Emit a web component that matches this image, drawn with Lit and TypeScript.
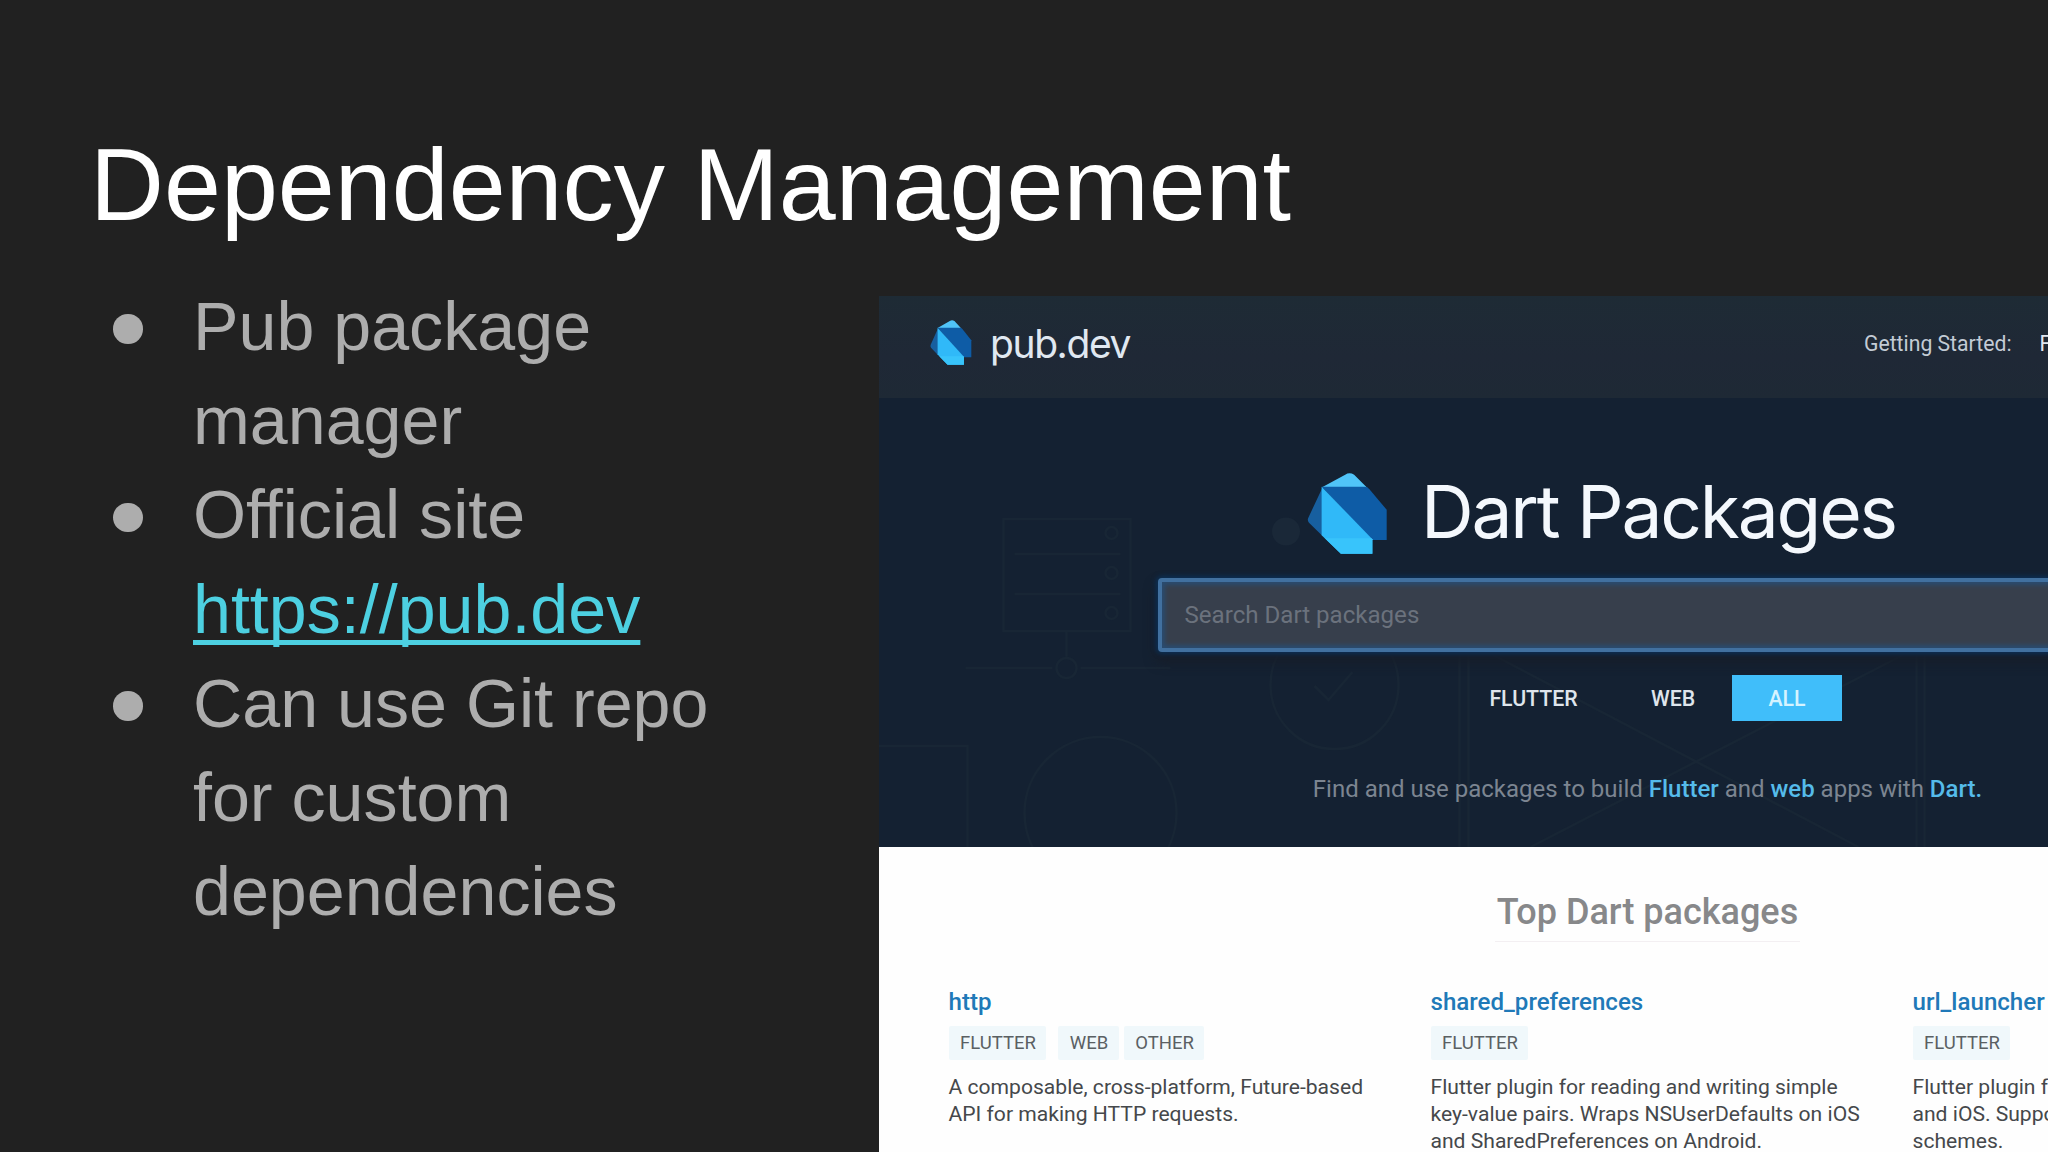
import { LitElement, html, css, svg } from "lit";

interface Pkg {
  name: string;
  tags: string[];
  lines: string[];
}

const PACKAGES: Pkg[] = [
  {
    name: "http",
    tags: ["FLUTTER", "WEB", "OTHER"],
    lines: ["A composable, cross-platform, Future-based", "API for making HTTP requests."],
  },
  {
    name: "shared_preferences",
    tags: ["FLUTTER"],
    lines: [
      "Flutter plugin for reading and writing simple",
      "key-value pairs. Wraps NSUserDefaults on iOS",
      "and SharedPreferences on Android.",
    ],
  },
  {
    name: "url_launcher",
    tags: ["FLUTTER"],
    lines: ["Flutter plugin for launching a URL on Android", "and iOS. Supports web, phone, SMS, and email", "schemes."],
  },
];

class DartLogo extends LitElement {
  static styles = css`
    :host { display: block; flex: none; }
    .mark { display: block; width: 100%; height: 100%; }
  `;
  render() {
    return html`<svg class="mark" viewBox="48 39 244 241" preserveAspectRatio="none">
      ${svg`
        <path d="M94 84 L52 172 Q48 180 54 187 L94 226 Z" fill="#175f9f" />
        <path d="M92 82 L163 44 Q176 36 190 44 L230 84 Z" fill="#50c4f8" />
        <path d="M92 80 H222 Q230 80 236 87 L288 148 V238 H243 Z" fill="#0e5ca6" />
        <path d="M92 80 L245 236 V279 H150 L92 224 Z" fill="#30b9f8" />
        <path d="M102 233 H242 L245 236 V279 H150 Z" fill="#38c4fb" />
      `}
    </svg>`;
  }
}
customElements.define("dart-logo", DartLogo);

class PackageCard extends LitElement {
  static properties = { pkg: { attribute: false } };
  declare pkg: Pkg;
  static styles = css`
    :host { display: block; font-family: Roboto, "Liberation Sans", sans-serif; white-space: nowrap; }
    .name { font-size: 24.1px; font-weight: 500; line-height: 30px; color: #2079b8; }
    .tags { display: flex; gap: 5px; margin-top: 9.3px; }
    .tag { padding: 0 10.5px 0 11.5px; font-size: 18.5px; line-height: 34px; height: 34px; color: #5a6063; background: #f0f8fb; border-radius: 2px; }
    .first { margin-right: 7px; }
    .desc { margin-top: 12.6px; font-size: 21.1px; line-height: 27px; color: #45484b; }
  `;
  render() {
    return html`
      <div class="name">${this.pkg.name}</div>
      <div class="tags">
        ${this.pkg.tags.map((t, i) => html`<span class="tag ${i === 0 ? "first" : ""}">${t}</span>`)}
      </div>
      <div class="desc">${this.pkg.lines.map((l) => html`<div>${l}</div>`)}</div>
    `;
  }
}
customElements.define("package-card", PackageCard);

class PubSite extends LitElement {
  static styles = css`
    :host { display: block; width: 1538px; background: #fefefe; font-family: Roboto, "Liberation Sans", sans-serif; white-space: nowrap; }
    .top {
      display: grid; grid-template-columns: 934px auto; align-items: start; justify-content: start;
      height: 102px; padding: 23px 0 0 51.5px; box-sizing: border-box;
      background: linear-gradient(#1e2b35, #1f2836 60%, #1e2935);
    }
    .brand { display: flex; gap: 18px; }
    .brand-logo { width: 42px; height: 45px; margin-top: 0.8px; }
    .brand-name { font: 400 39px/49px Inter, sans-serif; letter-spacing: -1.4px; color: #e0e8f1; }
    .nav { display: flex; gap: 28px; margin-top: 7px; font-size: 21.2px; line-height: 36px; color: #c3cbd5; }
    .nav-item { color: #e0e6ee; }
    .hero { position: relative; height: 448.7px; padding-top: 75px; box-sizing: border-box; background: #142132; }
    .deco { position: absolute; left: 0; top: 0; width: 1538px; height: 448.7px; }
    .content { position: relative; display: flex; flex-direction: column; align-items: center; }
    .heading { display: flex; gap: 33.5px; align-self: flex-start; margin-left: 428px; }
    .heading-logo { width: 81px; height: 81px; }
    .heading-text { font: 400 73px/78px Inter, sans-serif; letter-spacing: -2.15px; color: #f4f8fd; height: 81px; }
    .search {
      width: 980px; height: 74px; margin-top: 23.7px; padding-left: 23px; box-sizing: border-box;
      border: 4px solid #41709f; border-radius: 4px; background: #373f4c;
      box-shadow: 0 0 5px 2px #0a3058, 0 8px 12px 2px #171d28, inset 0 0 4px 3px #2a4c70;
      font-size: 24.1px; line-height: 67px; color: #6b727d;
    }
    .tabs { display: flex; gap: 1.3px; margin-top: 23.3px; }
    .tab { padding: 0 36px; height: 46.5px; font-size: 21.3px; font-weight: 500; line-height: 48px; color: #dfe5ec; }
    .selected { background: #40befa; color: #d5f3ff; }
    .tagline { margin-top: 50px; font-size: 24px; line-height: 36px; color: #7c8591; }
    .hl { font-weight: 500; color: #55bbea; }
    .list { display: flex; flex-direction: column; align-items: center; padding-top: 43.3px; }
    .list-title { padding: 0 2px 7px; border-bottom: 1.5px solid #f3eff2; font-size: 36px; font-weight: 500; line-height: 44px; color: #87888a; }
    .cards { display: grid; grid-template-columns: repeat(3, 432px); gap: 50px; align-self: stretch; padding-left: 70px; margin-top: 44.7px; }
  `;
  render() {
    return html`
      <header class="top">
        <div class="brand">
          <dart-logo class="brand-logo"></dart-logo>
          <span class="brand-name">pub.dev</span>
        </div>
        <nav class="nav"><span>Getting Started:</span><span class="nav-item">Flutter</span></nav>
      </header>
      <section class="hero">
        <svg class="deco" viewBox="878.5 398 1538 448.7" fill="none" stroke="#182635" stroke-width="2.5">
          ${svg`
            <rect x="1003" y="519" width="127" height="112" />
            <path d="M1014 554H1120M1014 594H1120M1066 632V658M965 668H1052M1080 668H1170" />
            <circle cx="1111" cy="533" r="6" /><circle cx="1111" cy="573" r="6" /><circle cx="1111" cy="613" r="6" />
            <circle cx="1066" cy="668" r="10" />
            <path d="M878 746H967V847" />
            <circle cx="1100" cy="813" r="76" />
            <circle cx="1334" cy="685" r="64" />
            <path d="M1314 686L1328 700L1352 672" />
            <circle cx="1285.500" cy="531.500" r="14" fill="#1a2838" stroke="none" />
            <path d="M1459 640V847M1468 640V847M1916 640V847M1924 640V847" />
            <path d="M1470 643L1858 847M1916 648L1530 847" />
          `}
        </svg>
        <div class="content">
          <div class="heading">
            <dart-logo class="heading-logo"></dart-logo>
            <span class="heading-text">Dart Packages</span>
          </div>
          <div class="search">Search Dart packages</div>
          <div class="tabs">
            <span class="tab">FLUTTER</span><span class="tab">WEB</span><span class="tab selected">ALL</span>
          </div>
          <div class="tagline">Find and use packages to build <span class="hl">Flutter</span> and <span class="hl">web</span> apps with <span class="hl">Dart.</span></div>
        </div>
      </section>
      <section class="list">
        <div class="list-title">Top Dart packages</div>
        <div class="cards">${PACKAGES.map((p) => html`<package-card .pkg=${p}></package-card>`)}</div>
      </section>
    `;
  }
}
customElements.define("pub-site", PubSite);

class AppRoot extends LitElement {
  static styles = css`
    :host {
      display: block; width: 2048px; height: 1152px; overflow: hidden; box-sizing: border-box;
      padding: 125.5px 0 0 90px; background: #212121;
      font-family: "Liberation Sans", Arial, sans-serif; white-space: nowrap;
    }
    .title { margin: 0; font-size: 102.4px; line-height: 118px; font-weight: 400; color: #fff; }
    .body { display: grid; grid-template-columns: 788.5px 1fr; margin-top: 35.5px; }
    .bullets { margin: 0; padding: 0; list-style: none; font-size: 68.2px; line-height: 94.2px; color: #adadad; }
    .bullet { display: grid; grid-template-columns: 103px auto; }
    .dot { width: 29.5px; height: 29.5px; margin: 35.3px 0 0 23px; border-radius: 50%; background: #adadad; }
    .link { color: #4dd0e1; text-decoration: underline; text-decoration-thickness: 5px; text-underline-offset: 7px; text-decoration-skip-ink: none; }
    .shot { height: 856px; margin-top: 17px; overflow: hidden; }
  `;
  render() {
    return html`
      <h1 class="title">Dependency Management</h1>
      <div class="body">
        <ul class="bullets">
          <li class="bullet"><span class="dot"></span><div>Pub package<br />manager</div></li>
          <li class="bullet"><span class="dot"></span><div>Official site<br /><a class="link">https://pub.dev</a></div></li>
          <li class="bullet"><span class="dot"></span><div>Can use Git repo<br />for custom<br />dependencies</div></li>
        </ul>
        <div class="shot"><pub-site></pub-site></div>
      </div>
    `;
  }
}
customElements.define("app-root", AppRoot);
